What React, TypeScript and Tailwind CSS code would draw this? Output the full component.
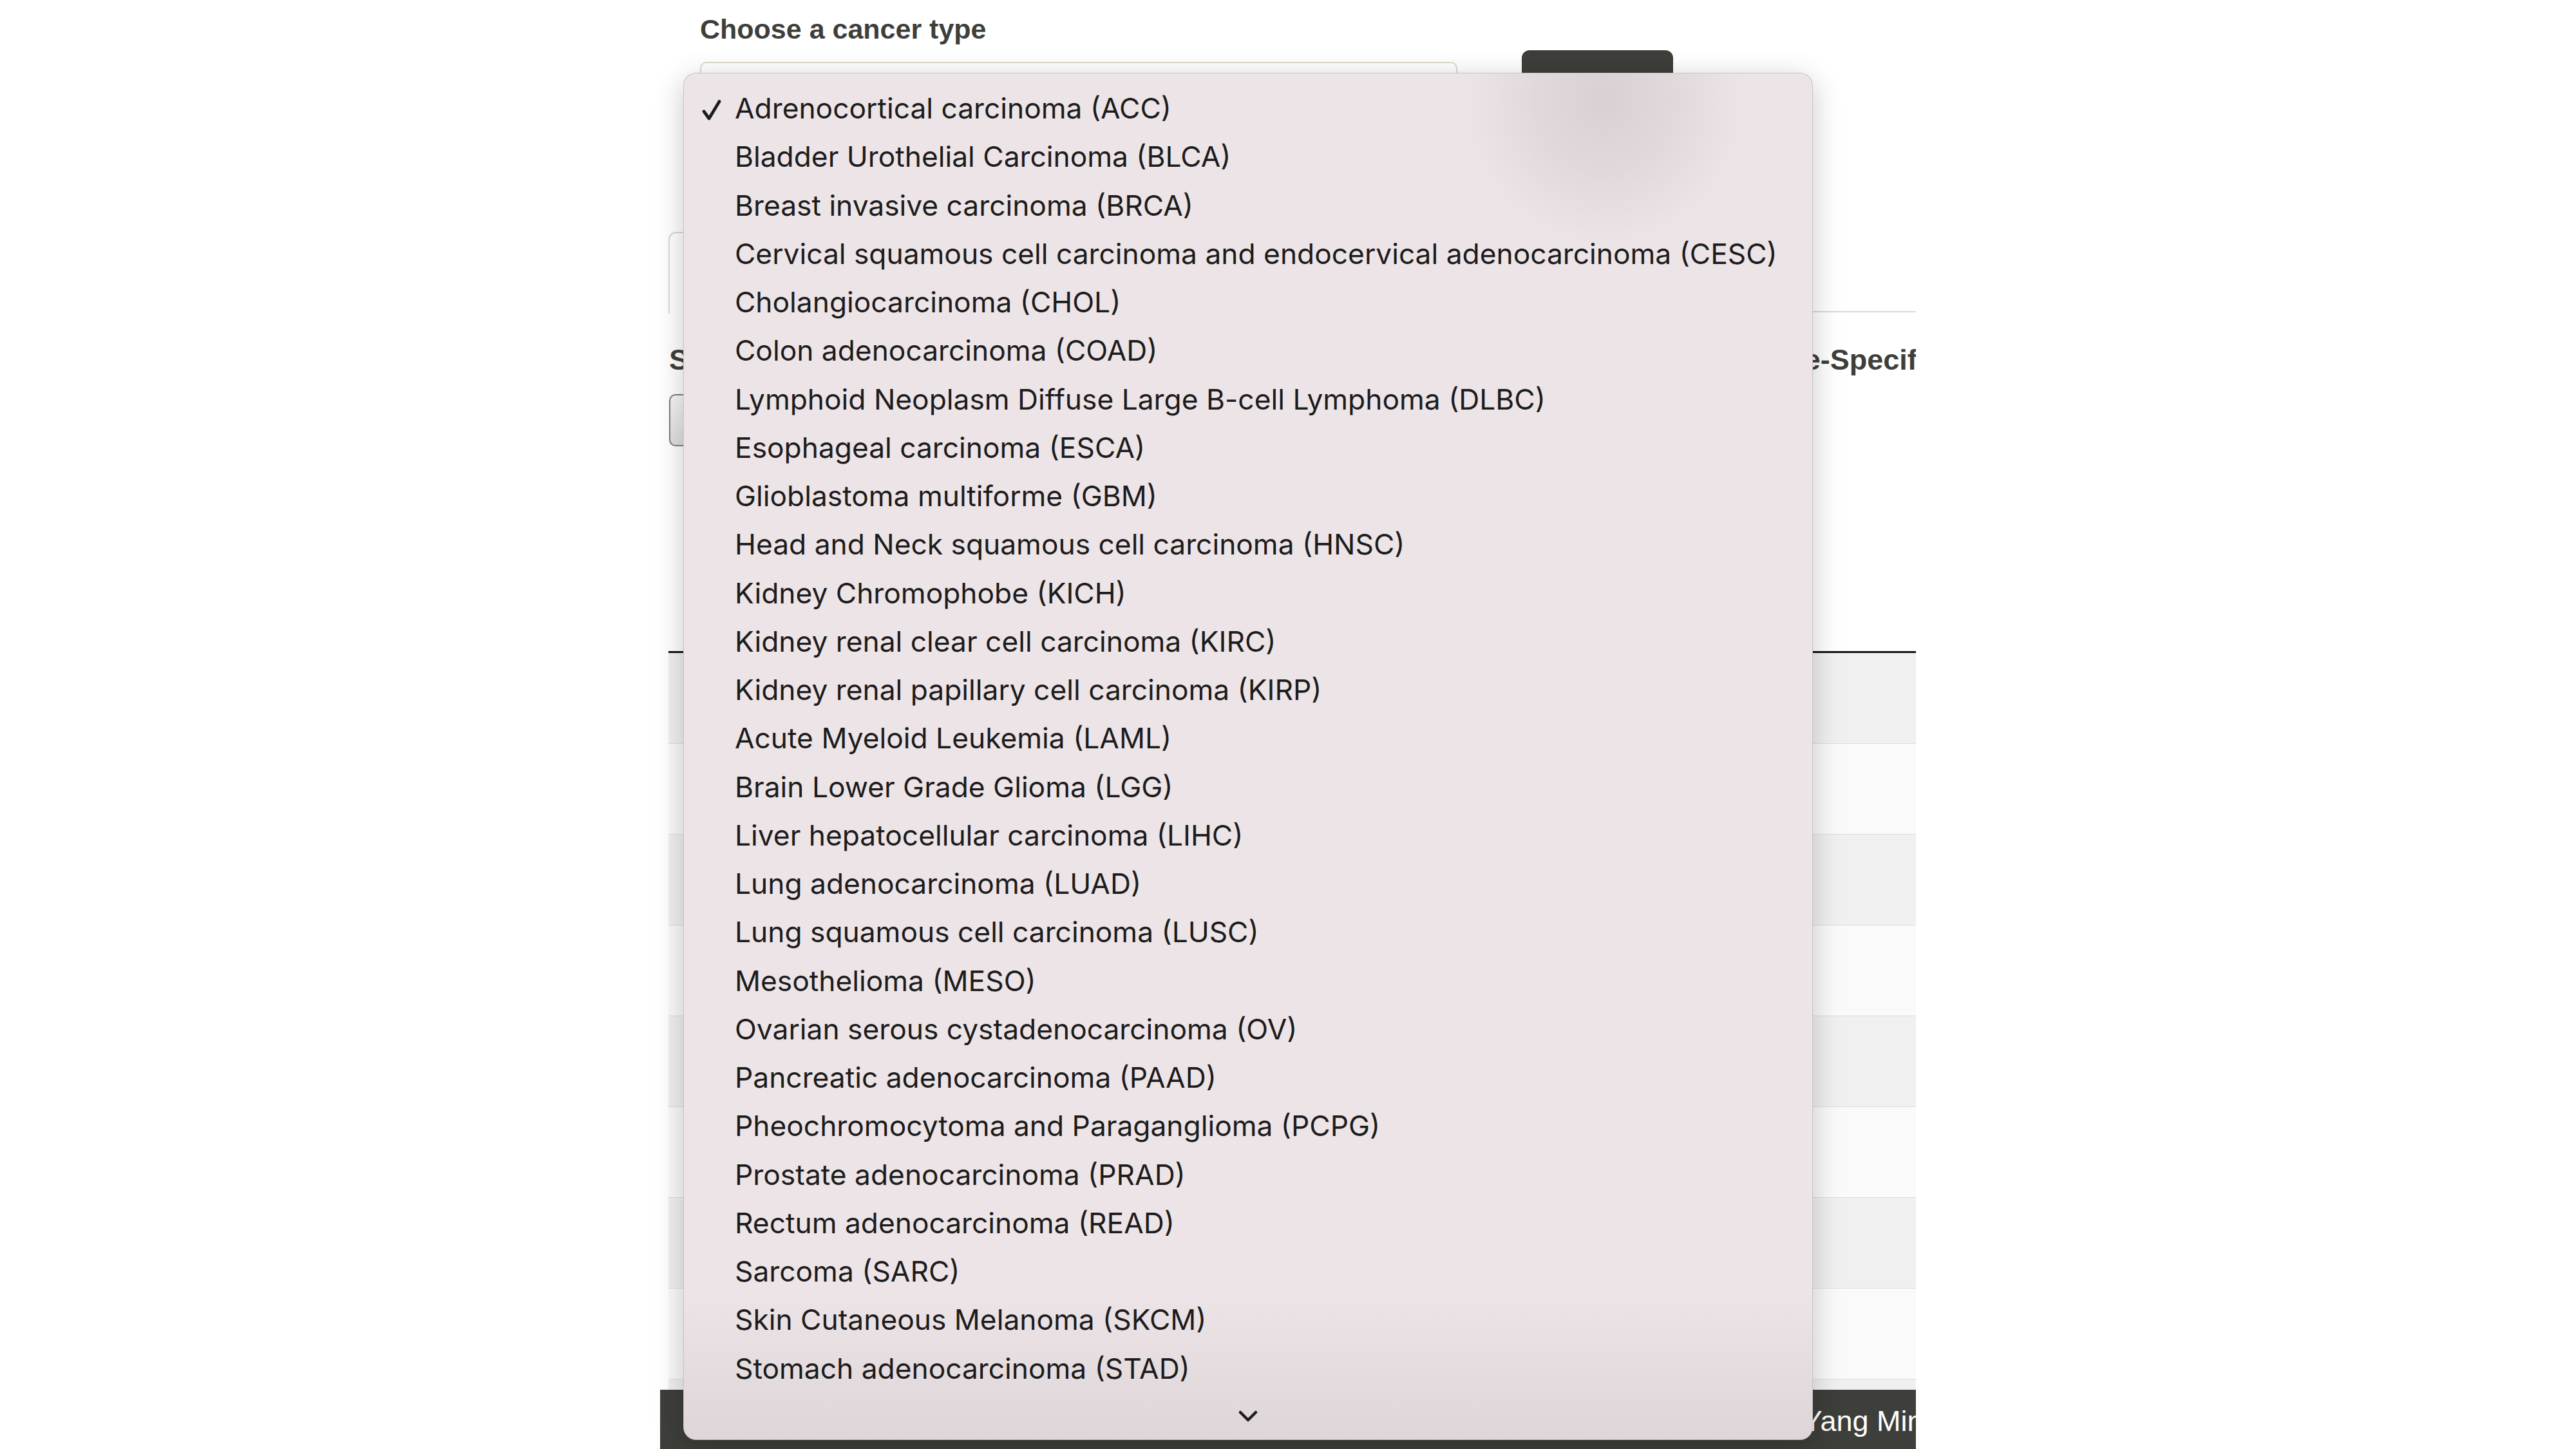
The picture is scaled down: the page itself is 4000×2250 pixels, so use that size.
const cancerTypes = [
  'Adrenocortical carcinoma (ACC)',
  'Bladder Urothelial Carcinoma (BLCA)',
  'Breast invasive carcinoma (BRCA)',
  'Cervical squamous cell carcinoma and endocervical adenocarcinoma (CESC)',
  'Cholangiocarcinoma (CHOL)',
  'Colon adenocarcinoma (COAD)',
  'Lymphoid Neoplasm Diffuse Large B-cell Lymphoma (DLBC)',
  'Esophageal carcinoma (ESCA)',
  'Glioblastoma multiforme (GBM)',
  'Head and Neck squamous cell carcinoma (HNSC)',
  'Kidney Chromophobe (KICH)',
  'Kidney renal clear cell carcinoma (KIRC)',
  'Kidney renal papillary cell carcinoma (KIRP)',
  'Acute Myeloid Leukemia (LAML)',
  'Brain Lower Grade Glioma (LGG)',
  'Liver hepatocellular carcinoma (LIHC)',
  'Lung adenocarcinoma (LUAD)',
  'Lung squamous cell carcinoma (LUSC)',
  'Mesothelioma (MESO)',
  'Ovarian serous cystadenocarcinoma (OV)',
  'Pancreatic adenocarcinoma (PAAD)',
  'Pheochromocytoma and Paraganglioma (PCPG)',
  'Prostate adenocarcinoma (PRAD)',
  'Rectum adenocarcinoma (READ)',
  'Sarcoma (SARC)',
  'Skin Cutaneous Melanoma (SKCM)',
  'Stomach adenocarcinoma (STAD)',
];

const rows = [0, 1, 2, 3, 4, 5, 6, 7, 8];

const Check = () => (
  <svg width="30" height="32" viewBox="0 0 30 32" fill="none" className="shrink-0">
    <path d="M3 18 L11 29 L27 2.5" stroke="#1c1c1c" strokeWidth="4.8" strokeLinecap="round" strokeLinejoin="round" />
  </svg>
);

const ChevronDown = () => (
  <svg width="30" height="18" viewBox="0 0 30 18" fill="none">
    <path d="M3 3 L15 15 L27 3" stroke="#1e1e1e" strokeWidth="4.5" strokeLinecap="round" strokeLinejoin="round" />
  </svg>
);

const Page = () => (
  <div className="ml-[1025px] w-[1950px] h-[2250px] relative overflow-hidden bg-white text-[#3e3f3a] font-['Liberation_Sans',Arial,sans-serif] flex flex-col">
    {/* Cancer type picker */}
    <div className="flex items-end pl-[62px] pt-[20px]">
      <div className="flex flex-col">
        <label className="text-[43px] leading-[50px] font-bold">Choose a cancer type</label>
        <div className="mt-[26px] w-[1176px] h-[84px] rounded-[10px] border-2 border-[#dfd7ca] bg-white" />
      </div>
      <button className="ml-[100px] w-[235px] h-[102px] rounded-[12px] bg-[#3e3f3a] text-white text-[40px] pt-[30px]">
        Submit
      </button>
    </div>

    {/* Tabs */}
    <div className="mt-[180px] ml-[13px] flex border-b-2 border-[#dfd7ca] h-[125px]">
      <div className="w-[420px] h-[127px] rounded-t-[12px] border-2 border-b-0 border-[#dfd7ca] bg-white flex items-center justify-center text-[40px]">
        Expression
      </div>
    </div>

    {/* Filters */}
    <div className="mt-[48px] ml-[14px] grid grid-cols-[1521px_1fr]">
      <div className="flex flex-col">
        <span className="text-[45px] leading-[52px] font-bold">Select a gene</span>
        <div className="mt-[27px] w-[760px] h-[81px] rounded-[10px] border-2 border-[#7b7b7b] bg-gradient-to-b from-[#f6f6f6] to-[#dedede]" />
      </div>
      <span className="text-[45px] leading-[52px] font-bold whitespace-nowrap">Cancer Type-Specific Expression</span>
    </div>

    {/* Table */}
    <div className="mt-[318px] ml-[13px] flex flex-col">
      <div className="h-[3px] bg-[#111111]" />
      {rows.map((r) => (
        <div
          key={r}
          className={`h-[141px] shrink-0 border-b border-[#dcdcdc] ${r % 2 === 0 ? 'bg-[#f0f0f0]' : 'bg-[#fafafa]'}`}
        />
      ))}
    </div>

    {/* Footer */}
    <div className="absolute left-0 right-0 bottom-0 h-[92px] bg-[#3e3f3a] text-white pl-[1598px] pt-[22px] text-[45px] leading-[54px] whitespace-nowrap">
      National Yang Ming Chiao Tung University
    </div>
  </div>
);

const Menu = () => (
  <div className="absolute left-[1061px] top-[113px] w-[1754px] h-[2123px] rounded-[20px] border border-black/15 bg-[#ede4e7] overflow-hidden shadow-[0_10px_45px_rgba(0,0,0,0.22)] flex flex-col font-['Inter','Noto_Sans',sans-serif] text-[#1c1c1c]">
    {/* blurred shapes seen through the translucent menu */}
    <div className="absolute left-[1209px] top-[-190px] w-[440px] h-[460px] rounded-full bg-[radial-gradient(closest-side,rgba(62,63,58,0.12),rgba(62,63,58,0.07)_50%,transparent)]" />
    <div className="absolute left-0 right-0 bottom-0 h-[230px] bg-gradient-to-b from-transparent to-[#3e3f3a]/[0.09]" />

    <ul className="relative pt-[17px] flex flex-col">
      {cancerTypes.map((name, i) => (
        <li key={name} className="h-[75.25px] flex items-center text-[44.3px] leading-[75.25px] whitespace-nowrap">
          <span className="w-[79px] shrink-0 pl-[28px] flex items-center mt-[4px]">
            {i === 0 && <Check />}
          </span>
          <span>{name}</span>
        </li>
      ))}
    </ul>
    <div className="relative flex-1 flex items-center justify-center">
      <ChevronDown />
    </div>
  </div>
);

export default function App() {
  return (
    <div className="w-[4000px] h-[2250px] bg-white relative overflow-hidden flex">
      <Page />
      <Menu />
    </div>
  );
}
